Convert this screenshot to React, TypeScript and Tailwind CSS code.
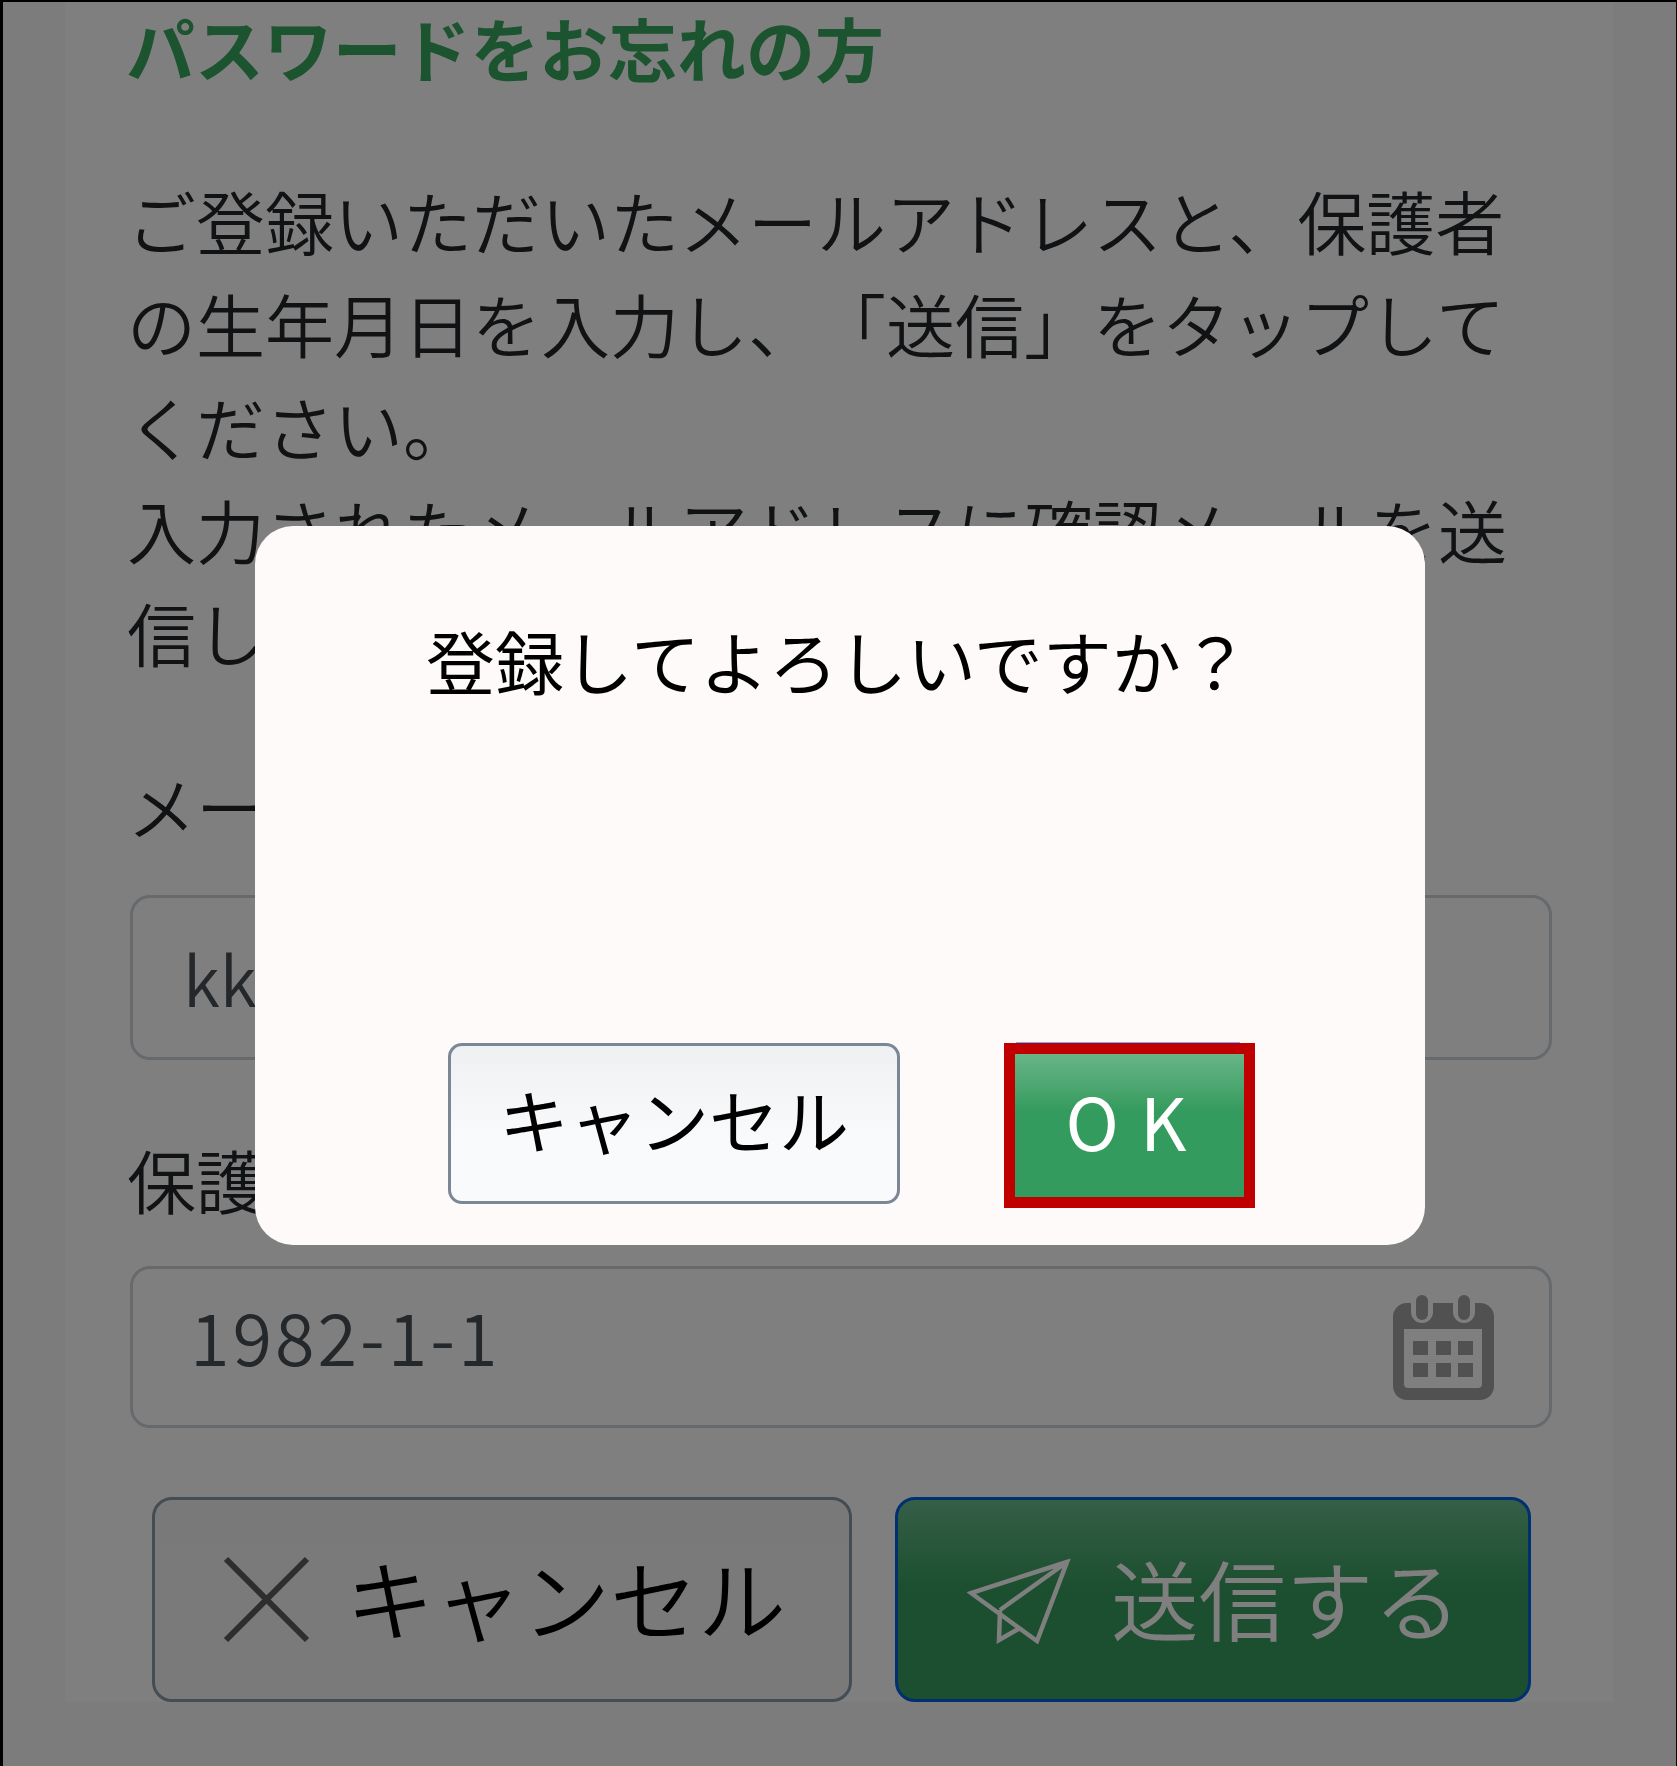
import React from 'react';

const CalendarIcon: React.FC = () => (
  <svg width="101" height="105" viewBox="0 0 101 105" className="shrink-0">
    <path d="M14 8h4v9a11 11 0 0 0 22 0V8h20v9a11 11 0 0 0 22 0V8h5a14 14 0 0 1 14 14v69a14 14 0 0 1-14 14H14A14 14 0 0 1 0 91V22A14 14 0 0 1 14 8z" fill="#a2a2a2" />
    <rect x="23" y="0" width="12" height="25" rx="6" fill="#a2a2a2" />
    <rect x="65" y="0" width="12" height="25" rx="6" fill="#a2a2a2" />
    <path d="M11 34h78v55a4 4 0 0 1-4 4H15a4 4 0 0 1-4-4z" fill="#ffffff" />
    {[20, 43, 65].map((x) =>
      [46, 68].map((y) => <rect key={`${x}-${y}`} x={x} y={y} width="15" height="14" fill="#a2a2a2" />)
    )}
  </svg>
);

const CrossIcon: React.FC = () => (
  <svg width="87" height="87" viewBox="0 0 87 87" className="shrink-0 translate-y-[4px]">
    <path d="M3 3l81 81M84 3L3 84" stroke="#5c5c5c" strokeWidth="6" fill="none" />
  </svg>
);

const PlaneIcon: React.FC = () => (
  <svg width="106" height="88" viewBox="0 0 106 88" className="shrink-0 translate-y-[3px]">
    <path
      d="M100 6L4 37l66 48zM100 6L33 54M33 54l-1 30 21-12"
      stroke="#ffffff"
      strokeWidth="4.5"
      fill="none"
      strokeLinejoin="miter"
    />
  </svg>
);

const App: React.FC = () => {
  return (
    <div
      className="relative w-[1677px] h-[1766px] overflow-hidden bg-[#f8f8f8] border-l-[3px] border-t-[2px] border-r border-black text-[#212529] [text-spacing-trim:space-all]"
      style={{ fontFamily: '"Noto Sans CJK JP", sans-serif' }}
    >
      <main className="ml-[62px] w-[1548px] h-[1700px] bg-white pl-[65px] pr-[61px]">
        <h1 className="-ml-[4px] pt-[4px] text-[68.9px] leading-[82px] font-bold text-[#38a860]">
          パスワードをお忘れの方
        </h1>

        <p className="-ml-[3px] mt-[81px] text-[69px] leading-[103px] font-[350]">
          ご登録いただいたメールアドレスと、保護者の生年月日を入力し、「送信」をタップしてください。
          <br />
          入力されたメールアドレスに確認メールを送信します。
        </p>

        <label className="-ml-[3px] block mt-[70px] text-[69px] leading-[103px] font-[350]">メールアドレス</label>
        <div className="mt-[38px] h-[165px] flex items-center border-[3px] border-[#ced4da] rounded-[20px] pl-[50px] text-[68px] text-[#495057] font-[350]">
          kk
        </div>

        <label className="-ml-[3px] block mt-[68px] text-[69px] leading-[103px] font-[350]">保護者の生年月日</label>
        <div className="mt-[35px] h-[162px] flex items-center justify-between border-[3px] border-[#ced4da] rounded-[20px] pl-[57px] pr-[55px] text-[72px] text-[#495057] font-[350] tracking-[3px]">
          <span className="pb-[24px]">1982-1-1</span>
          <CalendarIcon />
        </div>

        <div className="mt-[69px] flex gap-[43px] pl-[22px]">
          <button className="w-[700px] h-[205px] flex items-center gap-[36px] pl-[68px] pb-[8px] border-[3px] border-[#8898a8] rounded-[20px] bg-gradient-to-b from-[#f2f2f2] to-[#f5f5f5] to-40% text-[88px] font-[350] text-black">
            <CrossIcon />
            キャンセル
          </button>
          <button className="w-[636px] h-[205px] flex items-center gap-[38px] pl-[69px] pb-[6px] border-[3px] border-[#0060e0] rounded-[20px] bg-gradient-to-b from-[#6abe8e] to-[#369e5e] to-45% text-[87.5px] font-[350] text-white">
            <PlaneIcon />
            送信する
          </button>
        </div>
      </main>

      <div className="absolute inset-0 bg-black/50" />

      <div className="absolute left-[252px] top-[524px] w-[1170px] h-[719px] rounded-[38px] bg-[#fffafa] text-black flex flex-col">
        <p className="mt-[83px] pl-[171px] text-[69px] leading-[103px]">登録してよろしいですか？</p>
        <div className="mt-[331px] pl-[193px] flex items-start gap-[104px]">
          <button className="w-[452px] h-[161px] pb-[10px] border-[3px] border-[#7b8794] rounded-[14px] bg-gradient-to-b from-[#eef0f1] to-[#f9fafb] to-60% text-[70px] text-black">
            キャンセル
          </button>
          <div className="relative">
            <span className="absolute left-[12px] right-[15px] -top-px h-px bg-[#6ab0ff]" />
            <button className="w-[251px] h-[165px] pb-[12px] pl-[14px] border-[11.5px] border-[#c00000] bg-gradient-to-b from-[#67b587] to-[#339b5d] to-40% text-[72px] text-white tracking-[21px]">
              OK
            </button>
          </div>
        </div>
      </div>
    </div>
  );
};

export default App;
